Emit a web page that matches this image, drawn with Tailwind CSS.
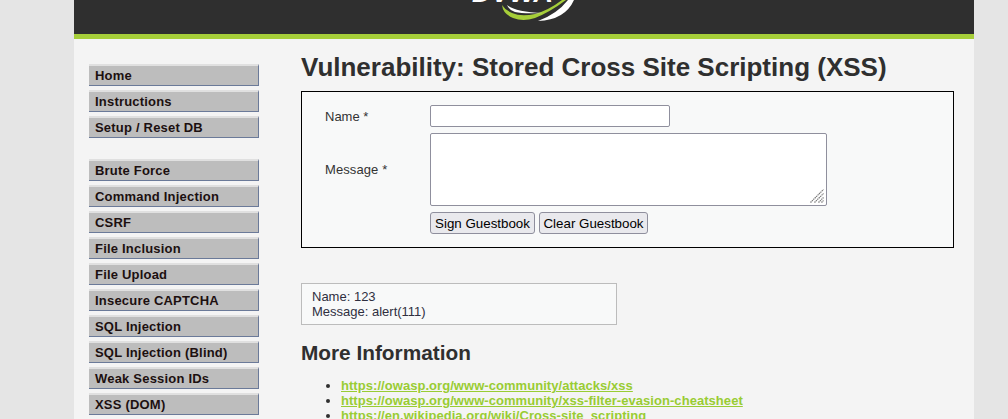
<!DOCTYPE html>
<html lang="en">
<head>
  <meta charset="UTF-8" />
  <title>Vulnerability: Stored Cross Site Scripting (XSS)</title>
  <script src="https://cdn.jsdelivr.net/npm/@tailwindcss/browser@4"></script>
</head>
<body class="bg-[#e5e5e5] font-['Liberation_Sans',Arial,sans-serif] text-[13px] text-[#2f2f2f]">
  <div class="w-[900px] h-screen overflow-hidden ml-[74px] bg-[#f4f4f4]">

    <!-- Header -->
    <header class="relative h-[39px] bg-[#2f2f2f] border-b-[5px] border-[#a6ce39] overflow-hidden">
      <span class="absolute left-[398px] top-[-20px] text-[27px] leading-[27px] font-bold italic text-white whitespace-nowrap">DVWA</span>
      <svg class="absolute left-[391px] top-0" width="120" height="24" viewBox="0 0 120 24">
        <path d="M37 5 Q38 14 48 18 Q58 22 70 18 Q85 12 101 0 L97 0 Q84 10 70 14 Q56 17 47 13 Q40 10 37 5 Z" fill="#a6ce39"/>
        <path d="M42 5 Q50 12 78 13 Q58 14 50 12 Q44 10 42 5 Z" fill="#ffffff"/>
        <path d="M73 21 Q100 20 109 0 L103 0 Q92 14 73 21 Z" fill="#ffffff"/>
      </svg>
    </header>

    <div class="flex">
      <!-- Menu -->
      <nav class="w-[227px] shrink-0 pl-[15px] pt-[25px] flex flex-col gap-[21px] font-bold text-[#1c1010] tracking-[0.2px]">
        <ul class="flex flex-col gap-1">
          <li class="w-[170px] h-[22px] leading-[20px] pl-[6px] bg-[#bdbdbd] border-t-2 border-t-[#e0e0e0] border-r border-r-[#6b7a99] border-b border-b-[#6b7a99]">Home</li>
          <li class="w-[170px] h-[22px] leading-[20px] pl-[6px] bg-[#bdbdbd] border-t-2 border-t-[#e0e0e0] border-r border-r-[#6b7a99] border-b border-b-[#6b7a99]">Instructions</li>
          <li class="w-[170px] h-[22px] leading-[20px] pl-[6px] bg-[#bdbdbd] border-t-2 border-t-[#e0e0e0] border-r border-r-[#6b7a99] border-b border-b-[#6b7a99]">Setup / Reset DB</li>
        </ul>
        <ul class="flex flex-col gap-1">
          <li class="w-[170px] h-[22px] leading-[20px] pl-[6px] bg-[#bdbdbd] border-t-2 border-t-[#e0e0e0] border-r border-r-[#6b7a99] border-b border-b-[#6b7a99]">Brute Force</li>
          <li class="w-[170px] h-[22px] leading-[20px] pl-[6px] bg-[#bdbdbd] border-t-2 border-t-[#e0e0e0] border-r border-r-[#6b7a99] border-b border-b-[#6b7a99]">Command Injection</li>
          <li class="w-[170px] h-[22px] leading-[20px] pl-[6px] bg-[#bdbdbd] border-t-2 border-t-[#e0e0e0] border-r border-r-[#6b7a99] border-b border-b-[#6b7a99]">CSRF</li>
          <li class="w-[170px] h-[22px] leading-[20px] pl-[6px] bg-[#bdbdbd] border-t-2 border-t-[#e0e0e0] border-r border-r-[#6b7a99] border-b border-b-[#6b7a99]">File Inclusion</li>
          <li class="w-[170px] h-[22px] leading-[20px] pl-[6px] bg-[#bdbdbd] border-t-2 border-t-[#e0e0e0] border-r border-r-[#6b7a99] border-b border-b-[#6b7a99]">File Upload</li>
          <li class="w-[170px] h-[22px] leading-[20px] pl-[6px] bg-[#bdbdbd] border-t-2 border-t-[#e0e0e0] border-r border-r-[#6b7a99] border-b border-b-[#6b7a99]">Insecure CAPTCHA</li>
          <li class="w-[170px] h-[22px] leading-[20px] pl-[6px] bg-[#bdbdbd] border-t-2 border-t-[#e0e0e0] border-r border-r-[#6b7a99] border-b border-b-[#6b7a99]">SQL Injection</li>
          <li class="w-[170px] h-[22px] leading-[20px] pl-[6px] bg-[#bdbdbd] border-t-2 border-t-[#e0e0e0] border-r border-r-[#6b7a99] border-b border-b-[#6b7a99]">SQL Injection (Blind)</li>
          <li class="w-[170px] h-[22px] leading-[20px] pl-[6px] bg-[#bdbdbd] border-t-2 border-t-[#e0e0e0] border-r border-r-[#6b7a99] border-b border-b-[#6b7a99]">Weak Session IDs</li>
          <li class="w-[170px] h-[22px] leading-[20px] pl-[6px] bg-[#bdbdbd] border-t-2 border-t-[#e0e0e0] border-r border-r-[#6b7a99] border-b border-b-[#6b7a99]">XSS (DOM)</li>
        </ul>
      </nav>

      <!-- Body -->
      <main class="w-[653px] shrink-0 pt-[13px]">
        <h1 class="text-[26px] leading-[30px] font-bold whitespace-nowrap">Vulnerability: Stored Cross Site Scripting (XSS)</h1>

        <div class="mt-[9px] h-[157px] border border-black bg-[#f8f9f9] pt-[13px] pl-[128px] relative">
          <div class="flex flex-col">
            <div class="flex items-center">
              <span class="absolute left-[23px] top-[15px] text-[#333]">Name *</span>
              <input type="text" class="w-[240px] h-[22px] bg-white border border-[#8f8f9d] rounded-[2px]" />
            </div>
            <div class="mt-[6px] flex">
              <span class="absolute left-[23px] top-[68px] text-[#333] tracking-[0.1px]">Message *</span>
              <div class="relative">
                <textarea class="block w-[397px] h-[73px] bg-white border border-[#8f8f9d] rounded-[2px] resize-none"></textarea>
                <svg class="absolute right-[3px] bottom-[3px]" width="14" height="14" viewBox="0 0 14 14" stroke="#777777" stroke-width="1.2" stroke-dasharray="1.4 0.6">
                  <path d="M0.5 13.5 L13.5 0.5 M4.5 13.5 L13.5 4.5 M8.5 13.5 L13.5 8.5 M11.5 13.5 L13.5 11.5" />
                </svg>
              </div>
            </div>
            <div class="mt-[6px] flex gap-1">
              <button class="w-[105px] h-[22px] pt-px text-[13.33px] leading-[20px] text-black bg-[#e9e9ed] border border-[#8f8f9d] rounded-[3px]">Sign Guestbook</button>
              <button class="w-[109px] h-[22px] pt-px text-[13.33px] leading-[20px] text-black bg-[#e9e9ed] border border-[#8f8f9d] rounded-[3px]">Clear Guestbook</button>
            </div>
          </div>
        </div>

        <div class="mt-[35px] w-[316px] h-[42px] border border-[#bcbcbc] bg-[#f8f9f9] px-[10px] pt-[5px] leading-[15px] text-[13px] text-[#2f2f3f]">
          Name: 123<br />Message: alert(111)
        </div>

        <h2 class="mt-[16px] text-[20.8px] leading-[24px] font-bold">More Information</h2>

        <ul class="mt-[13px] pl-[40px] list-disc font-bold text-[13px] leading-[15px] tracking-[0.05px]">
          <li><a href="#" class="text-[#99cc33] underline">https://owasp.org/www-community/attacks/xss</a></li>
          <li><a href="#" class="text-[#99cc33] underline">https://owasp.org/www-community/xss-filter-evasion-cheatsheet</a></li>
          <li><a href="#" class="text-[#99cc33] underline">https://en.wikipedia.org/wiki/Cross-site_scripting</a></li>
        </ul>
      </main>
    </div>
  </div>
</body>
</html>
